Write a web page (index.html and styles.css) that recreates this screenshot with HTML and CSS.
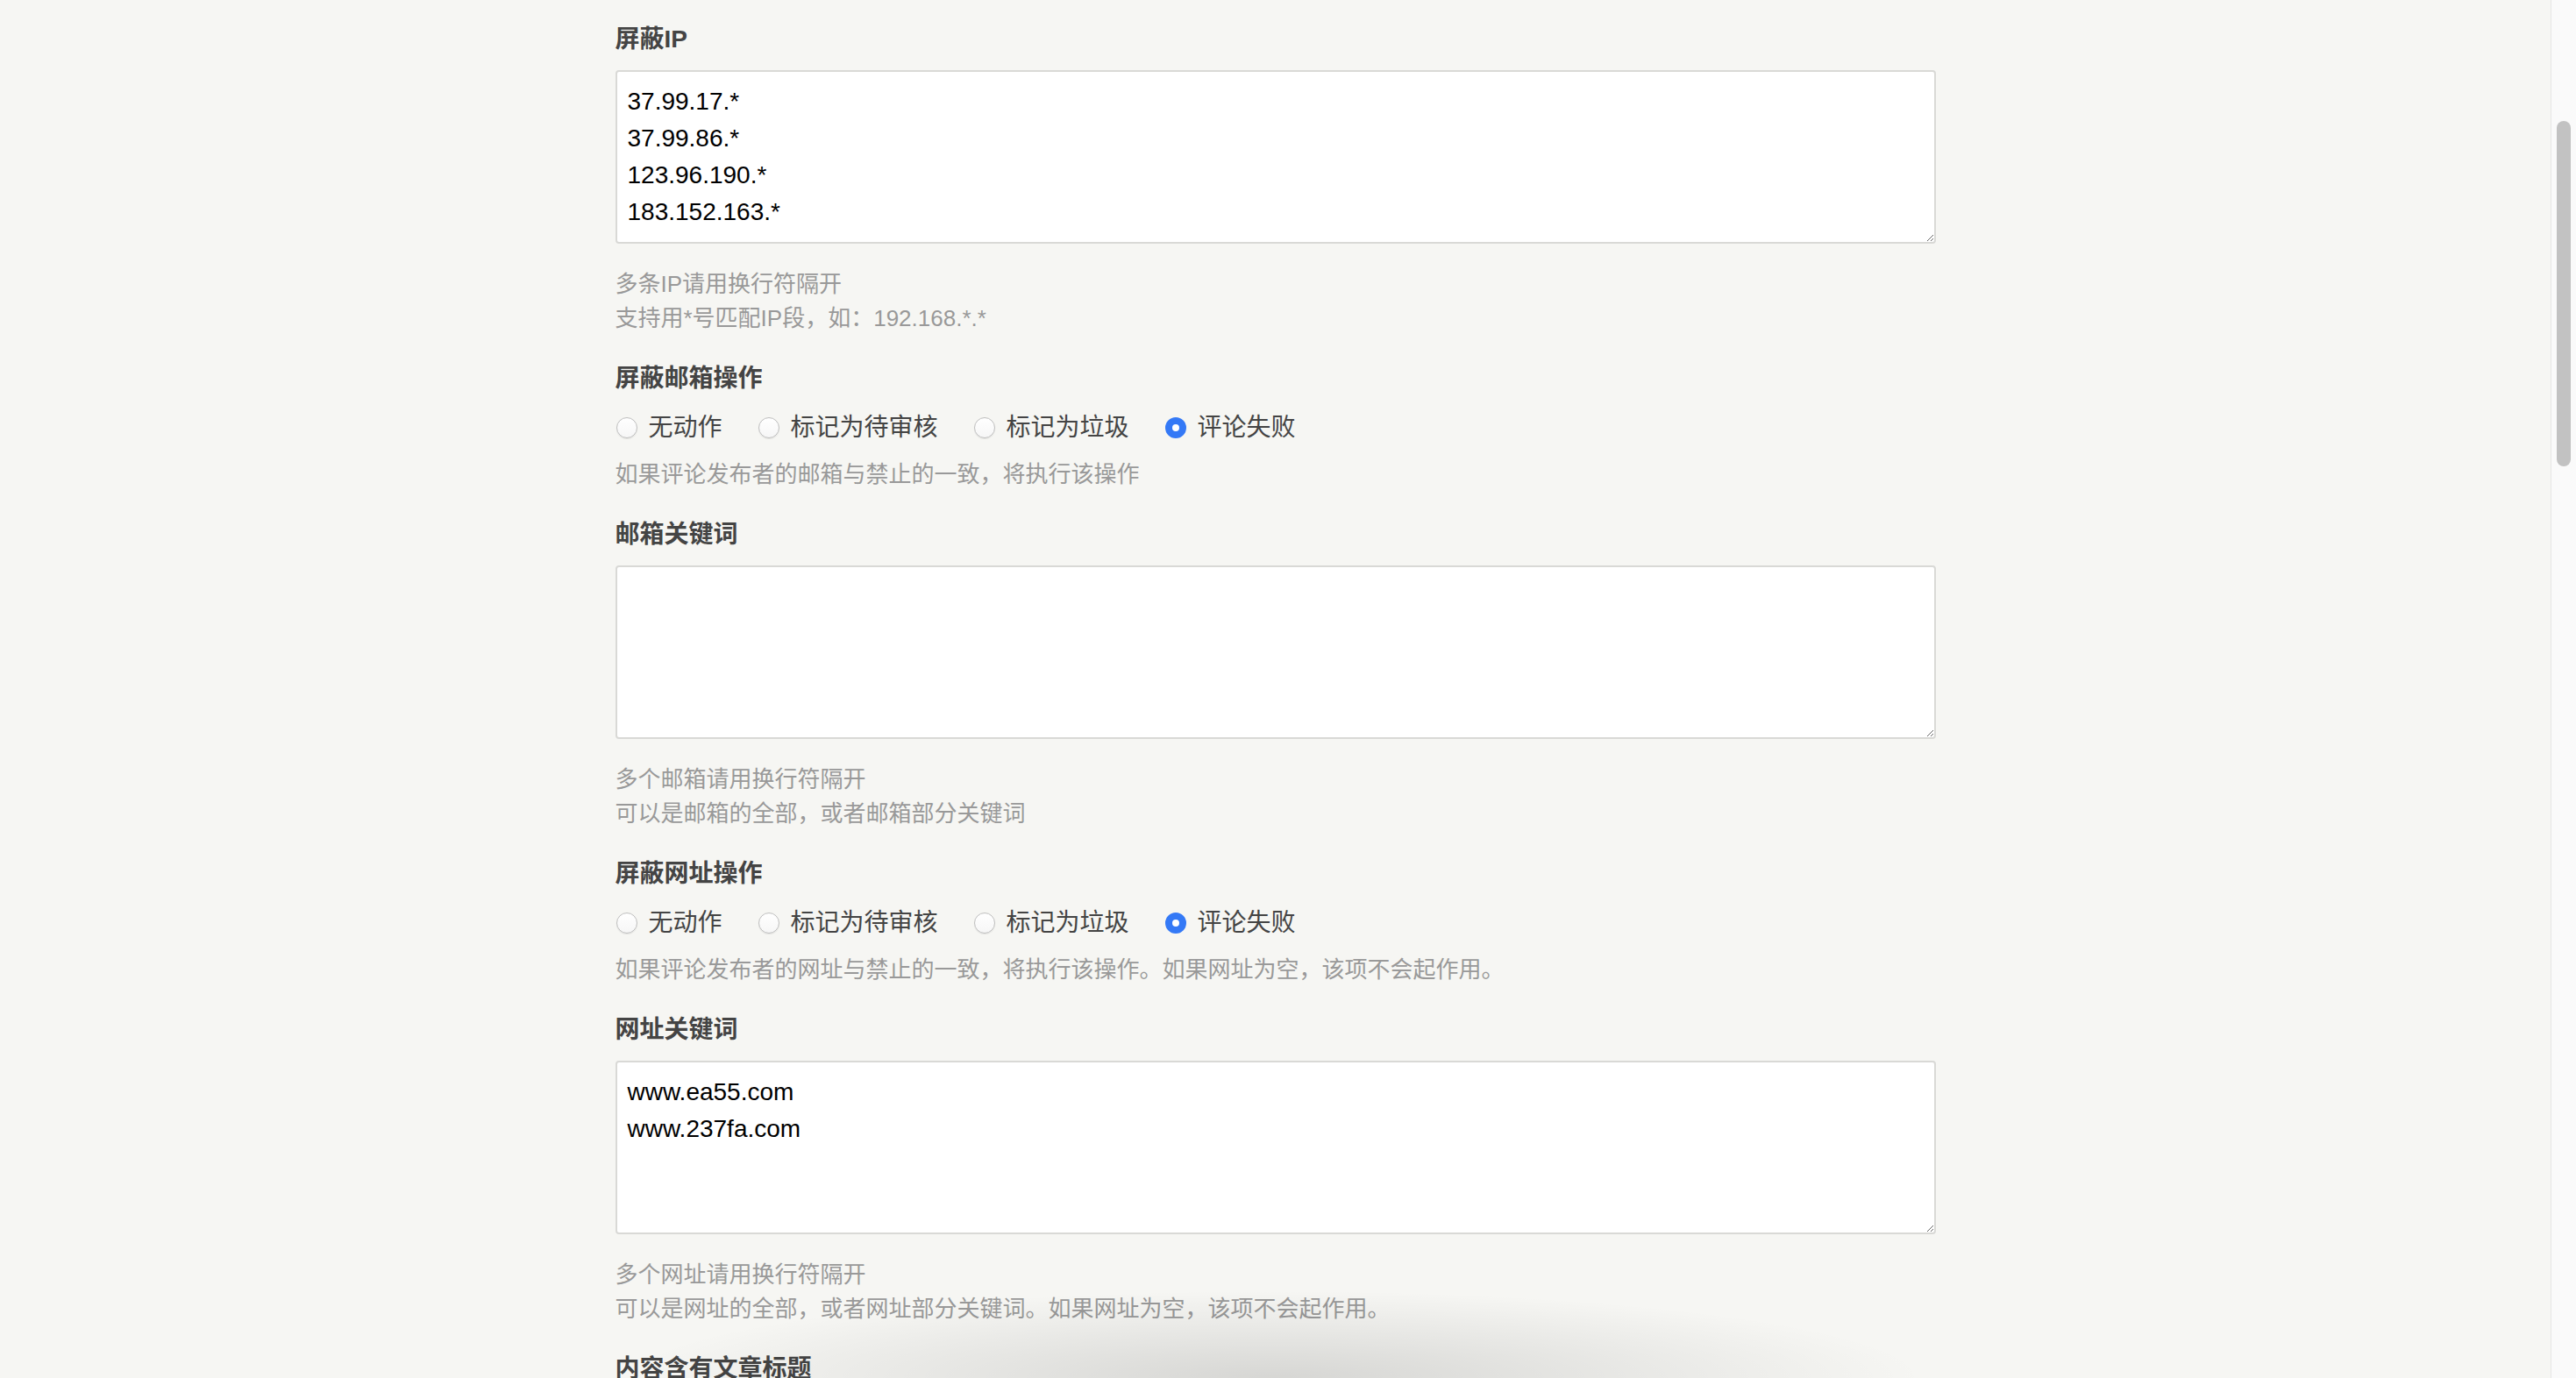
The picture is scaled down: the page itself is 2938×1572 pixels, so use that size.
FILE: index.html
```html
<!DOCTYPE html>
<html lang="zh-CN">
<head>
<meta charset="utf-8">
<title>评论过滤设置</title>
<link rel="stylesheet" href="styles.css">
</head>
<body>
<div class="page">
  <div class="main">
    <ul class="options">
      <li class="option">
        <label class="option-label">屏蔽IP</label>
        <textarea class="field">37.99.17.*
37.99.86.*
123.96.190.*
183.152.163.*</textarea>
        <p class="description">多条IP请用换行符隔开<br>支持用*号匹配IP段，如：192.168.*.*</p>
      </li>
      <li class="option">
        <label class="option-label">屏蔽邮箱操作</label>
        <div class="radios">
          <span class="radio-item"><input type="radio" name="mail"><label>无动作</label></span>
          <span class="radio-item"><input type="radio" name="mail"><label>标记为待审核</label></span>
          <span class="radio-item"><input type="radio" name="mail"><label>标记为垃圾</label></span>
          <span class="radio-item"><input type="radio" name="mail" checked><label>评论失败</label></span>
        </div>
        <p class="description">如果评论发布者的邮箱与禁止的一致，将执行该操作</p>
      </li>
      <li class="option">
        <label class="option-label">邮箱关键词</label>
        <textarea class="field"></textarea>
        <p class="description">多个邮箱请用换行符隔开<br>可以是邮箱的全部，或者邮箱部分关键词</p>
      </li>
      <li class="option">
        <label class="option-label">屏蔽网址操作</label>
        <div class="radios">
          <span class="radio-item"><input type="radio" name="url"><label>无动作</label></span>
          <span class="radio-item"><input type="radio" name="url"><label>标记为待审核</label></span>
          <span class="radio-item"><input type="radio" name="url"><label>标记为垃圾</label></span>
          <span class="radio-item"><input type="radio" name="url" checked><label>评论失败</label></span>
        </div>
        <p class="description">如果评论发布者的网址与禁止的一致，将执行该操作。如果网址为空，该项不会起作用。</p>
      </li>
      <li class="option">
        <label class="option-label">网址关键词</label>
        <textarea class="field">www.ea55.com
www.237fa.com</textarea>
        <p class="description">多个网址请用换行符隔开<br>可以是网址的全部，或者网址部分关键词。如果网址为空，该项不会起作用。</p>
      </li>
      <li class="option">
        <label class="option-label">内容含有文章标题</label>
      </li>
    </ul>
  </div>
  <div class="bottom-shade"></div>
</div>
<div class="scrollbar"><div class="thumb"></div></div>
</body>
</html>
```

FILE: styles.css
```css
html, body {
  margin: 0;
  padding: 0;
  height: 100%;
}

body {
  display: flex;
  overflow: hidden;
  background: #F6F6F3;
  font-family: "Liberation Sans", "Noto Sans CJK SC", sans-serif;
  font-size: 28px;
  line-height: 42px;
  color: #444;
}

.page {
  flex: 1;
  position: relative;
  overflow: hidden;
}

.main {
  width: 1506px;
  margin: 0 auto;
  padding-top: 24px;
}

.options {
  list-style: none;
  margin: 0;
  padding: 0;
}

.option {
  margin: 28px 0;
}

.option:first-child {
  margin-top: 0;
}

.option-label {
  display: block;
  font-weight: bold;
  font-size: 28px;
  line-height: 42px;
  margin-bottom: 14px;
  color: #444;
}

.field {
  display: block;
  box-sizing: border-box;
  width: 100%;
  height: 198px;
  margin: 0 0 27px;
  padding: 13px 12px 10px;
  border: 2px solid #D9D9D6;
  border-radius: 4px;
  background: #fff;
  color: #000;
  font-family: "Liberation Sans", "Noto Sans CJK SC", sans-serif;
  font-size: 28px;
  line-height: 42px;
  resize: vertical;
  outline: none;
}

.radios {
  display: flex;
  align-items: center;
  height: 42px;
}

.radio-item {
  display: inline-flex;
  align-items: center;
  margin-right: 40px;
  color: #444;
}

.radio-item input {
  appearance: none;
  -webkit-appearance: none;
  box-sizing: border-box;
  width: 24px;
  height: 24px;
  margin: 0 13px 0 1px;
  border-radius: 50%;
  border: 1px solid #BEBEBE;
  background: linear-gradient(#ffffff, #f6f6f6);
  box-shadow: 0 1px 1px rgba(0, 0, 0, 0.08);
}

.radio-item input:checked {
  border: 8px solid #3479F6;
  background: #fff;
  box-shadow: none;
}

.description {
  margin: 13px 0 0;
  font-size: 26px;
  line-height: 39px;
  color: #999;
}

.bottom-shade {
  position: absolute;
  left: 0;
  right: 0;
  bottom: 0;
  height: 100px;
  pointer-events: none;
  background: radial-gradient(ellipse 740px 100px at 50% 100%, rgba(0, 0, 0, 0.13) 0%, rgba(0, 0, 0, 0.07) 45%, rgba(0, 0, 0, 0) 100%);
}

.scrollbar {
  width: 28px;
  flex: none;
  background: #FAFAFA;
  border-left: 1px solid #E6E6E6;
}

.thumb {
  width: 16px;
  height: 394px;
  margin: 138px 0 0 6px;
  border-radius: 8px;
  background: #C2C2C2;
}
```
